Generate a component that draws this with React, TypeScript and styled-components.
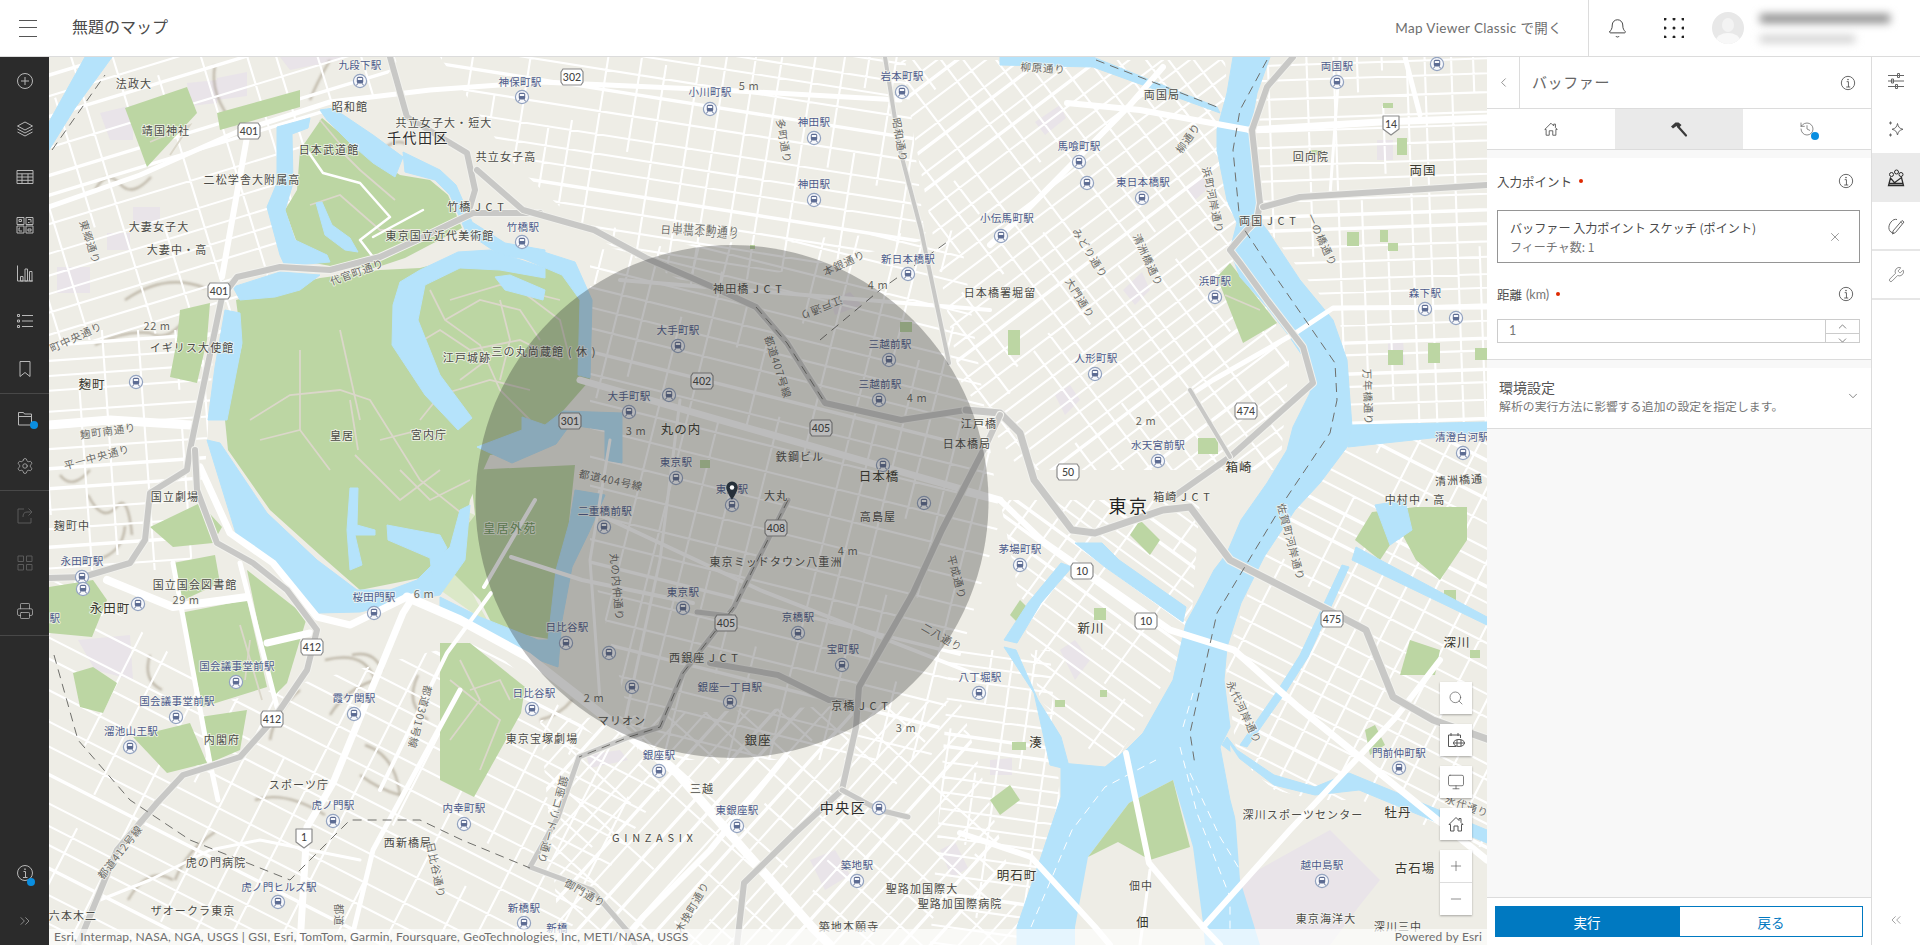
import React from 'react';
import styled, { createGlobalStyle } from 'styled-components';
import {
  Bell,
  ChevronDown,
  ChevronLeft,
  ChevronsLeft,
  ChevronsRight,
  ChevronUp,
  History,
  Minus,
  Monitor,
  Plus,
  Printer,
  Search,
  Settings,
  Wrench,
  X,
} from 'lucide-react';

const UI_FONT = `Lato, "Open Sans", "Noto Sans CJK JP", sans-serif`;
const MAP_FONT = `"Noto Sans CJK JP", "Noto Sans", sans-serif`;

const GlobalStyle = createGlobalStyle`
  html, body, #root { margin: 0; height: 100%; }
  body { overflow: hidden; font-family: ${UI_FONT}; background: #fff; }
`;

/* ---------- map data (page coordinates) ---------- */

type Patch = { pts: string; angle: number; a: number; b: number };

const PATCHES: Patch[] = [
  { pts: '49,57 400,57 300,200 240,340 49,340', angle: -17, a: 23, b: 36 },
  { pts: '49,330 215,330 205,470 190,570 49,570', angle: -4, a: 19, b: 30 },
  { pts: '49,560 230,700 480,640 660,790 560,945 49,945', angle: 27, a: 22, b: 38 },
  { pts: '440,57 905,57 925,240 700,290 590,235 510,160', angle: 9, a: 19, b: 26 },
  { pts: '590,250 960,230 1000,520 930,760 640,760 590,560', angle: 14, a: 24, b: 31 },
  { pts: '540,720 960,700 1030,945 560,945', angle: -48, a: 17, b: 27 },
  { pts: '900,60 1225,60 1240,260 1290,350 1280,470 1020,470 960,380', angle: -37, a: 16, b: 22 },
  { pts: '1255,57 1487,57 1487,430 1350,430 1340,320 1260,220', angle: -2, a: 16, b: 22 },
  { pts: '1300,440 1487,440 1487,945 1260,945 1225,660', angle: 27, a: 18, b: 28 },
  { pts: '1000,500 1200,500 1190,640 1110,770 1040,700', angle: 36, a: 17, b: 24 },
  { pts: '950,650 1050,650 1060,800 1030,945 930,945', angle: 8, a: 16, b: 24 },
  { pts: '1080,860 1140,860 1140,930 1075,930', angle: 10, a: 12, b: 22 },
];

const PARKS = [
  '125,108 187,87 197,113 147,167',
  '217,113 300,90 300,107 220,130',
  '150,527 200,503 222,527 213,543 173,547',
  '180,310 210,303 207,340 197,383 170,377 177,340',
  '173,563 215,555 220,583 177,603',
  '180,613 247,600 267,687 203,707',
  '247,570 307,617 287,683 273,697',
  '133,737 190,723 207,763 167,773',
  '200,717 247,710 240,750 212,762',
  '73,673 93,667 117,683 103,713 80,707',
  '49,587 93,580 107,600 92,637 49,633',
  '297,190 300,150 322,118 352,143 400,175 430,180 448,195 462,228 405,258 375,268 340,268 310,262 296,240 285,210',
  '236,300 320,278 380,270 420,268 470,255 560,270 585,300 590,380 555,420 520,452 490,455 470,500 460,560 420,578 360,590 320,555 270,510 228,450 225,420 242,345',
  '470,470 575,465 565,560 555,640 495,630 480,600 440,560 475,515',
  '440,643 470,643 525,687 521,713 474,797 440,780',
  '1217,277 1230,263 1277,323 1243,343',
  '1372,512 1416,507 1467,507 1467,540 1440,580 1416,560 1400,530 1380,560 1355,540',
  '1410,640 1440,650 1435,675 1400,675',
  '1020,600 1030,610 1020,625 1010,615',
  '1365,730 1375,725 1385,745 1370,755',
  '1270,820 1280,810 1300,850 1275,850',
  '1140,520 1160,540 1150,555 1130,535',
  '1356,830 1400,840 1390,870 1360,855',
  '990,800 1010,785 1020,800 1000,815',
  '1330,880 1370,850 1385,880 1350,905',
];

const LAWN = ['440,500 475,515 440,560', '440,530 476,600 490,625 440,590'];

const SMALL_GREEN: [number, number, number, number][] = [
  [1397, 138, 10, 17], [1347, 232, 12, 14], [1380, 230, 8, 12], [1388, 243, 10, 8], [1428, 343, 12, 20],
  [1388, 350, 15, 15], [1475, 348, 12, 12], [1383, 103, 10, 5], [1310, 150, 12, 5], [1198, 438, 20, 16],
  [1008, 330, 12, 25], [1094, 608, 12, 12], [1100, 690, 7, 7], [1055, 700, 10, 7], [1444, 590, 12, 12],
  [1470, 650, 10, 8], [1012, 742, 14, 8], [750, 245, 5, 4], [900, 322, 12, 10], [700, 460, 10, 8],
];

const PURPLE = [
  '1035,122 1060,105 1066,118 1045,135', '1377,140 1393,140 1393,160 1377,160', '1123,290 1142,272 1150,290 1135,305',
  '1187,190 1205,172 1212,185 1195,200', '1055,395 1070,385 1080,400 1065,415', '1388,340 1403,340 1405,365 1388,365',
  '100,113 133,105 133,140 110,140', '187,83 217,80 217,103 190,106', '217,78 247,72 247,96 217,100',
  '133,207 160,207 160,227 133,227', '107,233 130,233 130,250 107,250', '57,267 90,267 90,293 57,293', '78,640 130,635 133,680 95,670',
  '1060,650 1075,640 1090,660 1075,680', '990,760 1012,758 1012,775 990,775', '1325,820 1345,805 1370,830 1350,850',
  '1120,880 1150,860 1160,910 1130,920',
  '810,860 835,850 850,875 825,890', '940,850 955,842 968,868 952,878', '586,755 620,750 628,760 590,768',
  '290,70 340,60 346,57 280,57', '830,300 850,292 862,305 835,315',
];

const WATER = [
  '85,57 112,57 75,108 49,150 49,122',
  '277,127 310,118 308,128 292,134 293,183 285,210 295,240 327,255 330,262 285,266 280,255 267,207 277,183',
  '233,287 280,272 320,275 300,290 275,297 240,300',
  '320,110 333,108 373,135 403,157 395,177 373,163 350,143 327,120',
  '403,152 440,170 456,185 472,222 505,243 545,250 545,262 500,255 466,232 450,195 435,180 405,172',
  '420,270 458,252 490,250 545,268 545,278 500,270 460,268 425,285 418,320 440,375 472,418 458,430 425,395 392,345 393,305 400,282',
  '522,245 575,262 592,300 590,378 578,375 580,300 562,275 522,258',
  '495,277 505,290 543,300 545,290 510,275',
  '563,411 622,413 622,463 605,460 605,430 570,425 556,444 512,463 477,447 522,430 522,417 545,425',
  '575,490 605,495 590,530 572,567 562,620 558,667 511,650 474,627 440,610 440,597 480,617 538,640 548,640 556,570 570,520',
  '225,310 240,313 242,343 227,420 208,420 215,367',
  '207,440 220,443 267,513 317,560 357,590 390,590 417,580 450,547 460,510 470,505 465,560 440,595 410,600 360,612 317,613 273,560 237,537',
  '350,488 358,488 357,525 375,530 375,535 355,535 362,565 350,570 347,530',
  '387,525 440,535 447,548 432,575 430,558 388,540',
  '316,203 322,202 332,225 350,238 358,252 345,250 325,235',
  '1000,57 1093,57 1217,107 1220,113 1093,67 1000,65',
  '1233,57 1227,93 1217,130 1217,150 1227,200 1237,223 1230,250 1240,277 1267,307 1287,333 1310,367 1310,393 1293,427 1287,450 1267,483 1241,520 1227,553 1214,570 1197,603 1186,623 1173,680 1143,733 1126,750 1105,767 1061,763 1061,797 1041,857 1017,927 1017,945 1285,945 1281,923 1251,880 1230,800 1220,747 1230,727 1224,680 1227,647 1241,603 1264,557 1295,510 1320,483 1347,447 1352,427 1347,360 1333,320 1300,280 1267,230 1257,217 1250,130 1257,93 1270,57',
  '1352,425 1487,422 1487,432 1348,447',
  '1075,543 1102,543 1119,560 1186,607 1183,622 1105,567',
  '1061,563 1072,567 1041,603 1017,643 1004,640 1028,603',
  '1004,647 1016,650 1038,700 1061,737 1070,770 1050,765 1034,693',
  '1227,737 1237,750 1274,775 1315,787 1349,773 1366,780 1487,830 1487,843 1359,790 1315,795 1274,785 1222,745',
  '1356,547 1487,617 1487,625 1352,560',
  '1340,870 1487,940 1487,945 1470,945 1335,878',
  '1375,505 1405,500 1412,530 1390,545',
  '1247,747 1285,693 1308,657 1349,567 1342,565 1300,655 1278,690 1240,745',
];

const TSUKUDA = '1075,927 1088,857 1129,803 1173,780 1193,847 1203,923 1205,945 1075,945';
const ETCHU = '1230,745 1240,760 1274,790 1315,800 1360,800 1487,850 1487,945 1270,945 1240,880';

const ROADS: [string, number][] = [
  ['49,207 140,175 237,132 330,102 430,90 540,82 720,90 900,100', 5],
  ['247,137 222,277', 6],
  ['49,425 110,420 190,425', 9],
  ['200,467 230,533 273,563 317,617 350,625 407,597', 7],
  ['407,597 460,620 528,657 677,773 744,850 812,927 830,945', 9],
  ['413,597 403,613 333,783 307,827 300,945', 7],
  ['107,580 173,607 247,597', 8],
  ['267,643 310,633', 7],
  ['173,563 210,763 218,800', 5],
  ['240,563 277,707', 5],
  ['491,593 447,653 380,790', 4],
  ['460,690 373,850 350,945', 5],
  ['785,757 710,850 643,917 620,945', 6],
  ['1067,103 1140,110 1250,130', 6],
  ['1250,130 1380,122 1487,118', 7],
  ['1163,67 1130,105 1017,220 990,245', 6],
  ['1487,307 1333,308 1297,332 1213,380 1193,393', 5],
  ['1045,543 1170,630 1234,650 1298,707 1487,860', 7],
  ['1203,927 1290,830 1396,717 1440,660', 6],
  ['1126,753 1149,863 1180,900 1203,927 1220,945', 6],
  ['960,833 1031,857 1095,927 1110,945', 6],
  ['1000,500 1045,543', 6],
  ['1140,945 1150,870', 3],
  ['100,900 150,880 210,850 260,840 360,860', 3],
  ['620,280 990,310', 4],
  ['580,380 1000,500', 7],
  ['600,515 760,590 990,680', 4],
  ['1330,195 1340,57', 3],
  ['1405,57 1420,115', 5],
  ['484,587 535,500', 4],
  ['511,557 582,580 693,603', 4],
  ['307,150 323,173 360,183 390,217 360,240 373,257', 2.5],
  ['373,237 423,210', 2.5],
  ['610,440 590,560 600,700', 3],
  ['680,400 660,560 625,720', 3],
];

const HIGHWAYS: [string, number][] = [
  ['390,57 407,117 467,153 475,190 470,207', 6],
  ['540,213 473,213 417,240 380,257 330,270 280,267 237,277 222,297 190,450 187,470 150,493 145,540 130,563 83,577 49,578', 6],
  ['477,170 523,210 594,230 646,258 715,288 756,307 787,343 825,403 901,420 966,410', 6],
  ['195,450 197,490 217,543 253,563 287,590 317,630 307,670 273,720 240,757 183,775 157,803 117,850 78,945', 6],
  ['966,410 1000,413 1020,433 1034,480 1072,530 1095,533 1163,510 1190,507 1230,560 1328,610 1366,630 1393,697 1433,720 1490,740', 7],
  ['1173,497 1230,457 1313,383 1303,347 1267,300 1240,263 1230,250 1247,230 1257,220 1260,203 1252,130 1267,87 1293,57', 6],
  ['1263,207 1300,197 1487,185', 6],
  ['1190,390 1230,457', 4],
  ['788,500 734,607 683,673 660,727 629,737 579,757 558,817 530,867 592,890 629,933 635,945', 5],
  ['697,612 730,616', 5],
  ['710,663 778,675 829,700 859,703', 6],
  ['987,443 942,530 913,593 859,687 856,727 842,790 795,833 744,883 737,945', 6],
  ['842,790 879,810 908,817', 5],
  ['1000,415 987,443', 6],
  ['949,363 921,230 900,150 885,57', 4],
];

const RAILS = [
  '1267,60 1240,110 1233,150 1240,223 1273,273 1335,363 1337,400 1330,433 1287,497 1217,613 1190,733 1195,765',
  '1096,60 1217,107',
  '52,150 105,75',
  '788,500 734,607 683,673 660,727 629,737 579,757',
  '756,307 787,343 825,403',
  '54,655 78,740 130,800 190,840 290,880 350,820 420,820 462,840 530,868',
  '820,340 880,290 950,240',
];

const BAY_DASH = [
  '1031,927 1072,830 1105,787 1156,760', '1183,727 1193,693', '1180,747 1197,813 1230,897 1230,930', '1190,773 1220,837 1240,870',
];

const PALACE_PATHS = [
  '250,420 290,395 340,390 370,400 420,480 470,520', '415,345 440,330 470,350 520,340 560,360', '450,300 500,285 560,300',
  '420,420 440,395 490,380 530,390', '355,455 400,500 440,470', '310,205 340,195 380,230 420,230', '340,150 360,170 395,200',
  '150,142 190,125 170,155', '350,400 358,450', '240,625 262,700', '450,680 500,720 480,770', '1225,295 1260,310',
  '430,290 445,320 480,345 500,390 530,420', '445,320 480,300 520,310 540,340', '460,380 500,350', '500,300 510,340 500,380',
  '520,290 560,320 570,360', '260,440 300,430 330,470', '300,350 300,430', '380,440 420,430 445,440', '400,470 430,500 470,480',
  '340,330 360,420', '470,690 500,680 510,700', '460,660 480,700 450,740', '250,640 245,680', '320,120 345,150',
];

const HILLS = [
  'M95,190 q12,-22 26,-5 q12,12 30,-8', 'M125,300 q40,-28 80,-12', 'M95,345 q30,-15 55,-12 q18,10 36,-15',
  'M88,495 q15,30 30,10 q10,-10 14,30', 'M95,560 q28,-6 30,-34', 'M325,660 q40,-10 50,20 q-30,10 -45,35',
  'M300,690 q-25,20 -30,50', 'M365,745 q30,10 35,50 q-20,-5 -40,-20', 'M352,655 q22,-5 30,15', 'M418,675 q-14,30 10,45',
  'M128,900 q20,-35 45,-20', 'M175,880 q12,-30 40,-48', 'M255,800 q30,-10 70,15', 'M540,720 q20,-5 32,-20',
  'M60,475 q12,16 30,-5', 'M150,655 q-8,25 12,35', 'M215,65 q-6,30 20,60', 'M330,60 q-14,24 -20,40', 'M382,150 q14,-12 24,-6',
];

type Kind = 's' | 'p' | 'n' | 'w' | 'big' | 'r' | 'e' | 'g';
type Label = [string, number, number, Kind, number?];

const LABELS: Label[] = [
  ['九段下駅', 360, 65, 's'], ['神保町駅', 520, 82, 's'], ['法政大', 134, 84, 'p'], ['昭和館', 350, 107, 'p'],
  ['靖国神社', 166, 131, 'p'], ['共立女子大・短大', 444, 123, 'p'], ['千代田区', 418, 139, 'w'], ['共立女子高', 506, 157, 'p'],
  ['日本武道館', 329, 150, 'p'], ['二松学舎大附属高', 252, 180, 'p'], ['竹橋 J C T', 476, 207, 'p'], ['竹橋駅', 523, 227, 's'],
  ['東京国立近代美術館', 440, 236, 'p'], ['大妻女子大', 159, 227, 'p'], ['大妻中・高', 177, 250, 'p'], ['東郷通り', 90, 242, 'r', 72],
  ['代官町通り', 357, 272, 'r', -20], ['22 m', 157, 326, 'e'], ['町中央通り', 76, 337, 'r', -25], ['イギリス大使館', 192, 348, 'p'],
  ['江戸城跡', 467, 358, 'p'], ['三の丸尚蔵館 ( 休 )', 544, 352, 'p'], ['麹町', 92, 385, 'n'], ['麹町南通り', 108, 431, 'r', -8],
  ['皇居', 342, 436, 'p'], ['宮内庁', 429, 435, 'p'], ['平一中央通り', 97, 457, 'r', -15], ['国立劇場', 175, 497, 'p'],
  ['麹町中', 72, 526, 'p'], ['永田町駅', 82, 561, 's'], ['国立国会図書館', 195, 585, 'p'], ['29 m', 186, 600, 'e'],
  ['永田町', 110, 609, 'n'], ['駅', 55, 618, 's'], ['桜田門駅', 374, 597, 's'], ['6 m', 424, 594, 'e'],
  ['国会議事堂前駅', 237, 666, 's'], ['国会議事堂前駅', 177, 701, 's'], ['霞ケ関駅', 354, 698, 's'], ['溜池山王駅', 131, 731, 's'],
  ['内閣府', 222, 740, 'p'], ['スポーツ庁', 299, 785, 'p'], ['虎ノ門駅', 333, 805, 's'], ['西新橋局', 408, 843, 'p'],
  ['内幸町駅', 464, 808, 's'], ['都道301号線', 420, 717, 'r', 105], ['都道412号線', 120, 852, 'r', -52], ['虎の門病院', 216, 863, 'p'],
  ['虎ノ門ヒルズ駅', 279, 887, 's'], ['六本木二', 73, 916, 'p'], ['ザオークラ東京', 193, 911, 'p'], ['都道', 339, 915, 'r', 90],
  ['日比谷通り', 436, 870, 'r', 78], ['神田橋 J C T', 748, 289, 'p'], ['大手町駅', 678, 330, 's'], ['大手町駅', 629, 396, 's'],
  ['3 m', 636, 431, 'e'], ['丸の内', 681, 430, 'n'], ['東京駅', 676, 462, 's'], ['鉄鋼ビル', 800, 457, 'p'], ['日本橋', 879, 477, 'n'],
  ['日本橋局', 967, 444, 'p'], ['江戸橋', 979, 424, 'p'], ['大丸', 776, 496, 'p'], ['東京駅', 732, 489, 's'], ['高島屋', 878, 517, 'p'],
  ['二重橋前駅', 605, 511, 's'], ['皇居外苑', 510, 529, 'g'], ['都道404号線', 611, 480, 'r', 12], ['都道407号線', 778, 367, 'r', 72],
  ['日本橋本町通り', 700, 232, 'r', 4], ['本銀通り', 844, 263, 'r', -25], ['江戸通り', 821, 308, 'r', 158], ['新日本橋駅', 908, 259, 's'],
  ['日本橋署堀留', 1000, 293, 'p'], ['4 m', 878, 285, 'e'], ['三越前駅', 890, 344, 's'], ['三越前駅', 880, 384, 's'], ['4 m', 917, 398, 'e'],
  ['東京ミッドタウン八重洲', 776, 562, 'p'], ['4 m', 848, 551, 'e'], ['丸の内仲通り', 617, 587, 'r', 85], ['東京駅', 683, 592, 's'],
  ['京橋駅', 798, 617, 's'], ['二八通り', 942, 637, 'r', 30], ['平成通り', 957, 577, 'r', 75], ['日比谷駅', 567, 627, 's'], ['2 m', 594, 698, 'e'],
  ['宝町駅', 843, 649, 's'], ['西銀座 J C T', 704, 658, 'p'], ['銀座一丁目駅', 730, 687, 's'], ['マリオン', 622, 721, 'p'],
  ['京橋 J C T', 860, 706, 'p'], ['銀座', 758, 741, 'n'], ['3 m', 906, 728, 'e'], ['日比谷駅', 534, 693, 's'], ['東京宝塚劇場', 542, 739, 'p'],
  ['銀座駅', 659, 755, 's'], ['三越', 702, 789, 'p'], ['銀座コリドー通り', 553, 820, 'r', 105], ['東銀座駅', 737, 810, 's'],
  ['中央区', 843, 809, 'w'], ['G I N Z A S I X', 653, 838, 'p'], ['御門通り', 585, 893, 'r', 30], ['新橋駅', 524, 908, 's'], ['新橋', 557, 928, 's'],
  ['木挽町通り', 692, 907, 'r', -60], ['築地駅', 857, 865, 's'], ['聖路加国際大', 922, 889, 'p'], ['聖路加国際病院', 960, 904, 'p'],
  ['築地本願寺', 849, 927, 'p'], ['東京', 1129, 509, 'big'], ['箱崎 J C T', 1182, 497, 'p'], ['中村中・高', 1415, 500, 'p'],
  ['茅場町駅', 1020, 549, 's'], ['新川', 1091, 629, 'n'], ['佐賀町河岸通り', 1291, 542, 'r', 75], ['深川', 1457, 643, 'n'],
  ['八丁堀駅', 980, 677, 's'], ['永代河岸通り', 1244, 712, 'r', 65], ['門前仲町駅', 1399, 753, 's'], ['湊', 1036, 743, 'n'],
  ['深川スポーツセンター', 1303, 815, 'p'], ['牡丹', 1398, 813, 'n'], ['越中島駅', 1322, 865, 's'], ['古石場', 1415, 869, 'n'],
  ['明石町', 1017, 876, 'n'], ['佃中', 1141, 886, 'p'], ['佃', 1143, 923, 'n'], ['東京海洋大', 1326, 919, 'p'], ['深川三中', 1398, 927, 'p'],
  ['永代通り', 1467, 806, 'r', 20], ['柳原通り', 1043, 68, 'r', 4], ['両国局', 1162, 95, 'p'], ['両国駅', 1337, 66, 's'],
  ['馬喰町駅', 1079, 146, 's'], ['清洲橋通り', 1148, 260, 'r', 65], ['柳通り', 1188, 138, 'r', -55], ['回向院', 1311, 157, 'p'], ['両国', 1423, 171, 'n'],
  ['東日本橋駅', 1143, 182, 's'], ['小伝馬町駅', 1007, 218, 's'], ['みどり通り', 1090, 253, 'r', 58], ['大門通り', 1080, 298, 'r', 58],
  ['両国 J C T', 1268, 221, 'p'], ['一の橋通り', 1322, 240, 'r', 65], ['浜町河岸通り', 1213, 200, 'r', 78], ['浜町駅', 1215, 281, 's'],
  ['森下駅', 1425, 293, 's'], ['人形町駅', 1096, 358, 's'], ['万年橋通り', 1368, 397, 'r', 88], ['2 m', 1146, 421, 'e'], ['清澄白河駅', 1462, 437, 's'],
  ['水天宮前駅', 1158, 445, 's'], ['箱崎', 1239, 468, 'n'], ['清洲橋通', 1459, 480, 'p', -4], ['小川町駅', 710, 92, 's'], ['5 m', 749, 86, 'e'],
  ['神田駅', 814, 122, 's'], ['岩本町駅', 902, 76, 's'], ['神田駅', 814, 184, 's'], ['多町通り', 784, 141, 'r', 80], ['昭和通り', 900, 140, 'r', 80],
  ['出世不動通り', 706, 229, 'r', 4],
];

const STATIONS: [number, number][] = [
  [360, 81], [522, 97], [522, 242], [136, 382], [82, 577], [83, 589], [138, 604], [374, 613], [236, 682], [176, 717], [354, 714],
  [130, 747], [333, 821], [278, 902], [464, 824], [678, 346], [629, 412], [669, 395], [676, 478], [883, 465], [732, 505], [924, 503],
  [604, 527], [908, 274], [889, 360], [879, 400], [683, 608], [798, 633], [566, 643], [609, 653], [632, 687], [842, 665], [730, 702],
  [532, 709], [659, 771], [737, 826], [879, 808], [524, 923], [857, 881], [1020, 565], [979, 693], [1399, 768], [1322, 881],
  [1337, 82], [1437, 64], [1079, 162], [1087, 183], [1142, 198], [1001, 236], [1215, 297], [1425, 309], [1456, 318], [1095, 374],
  [1463, 453], [1158, 461], [710, 109], [814, 138], [902, 92], [814, 200],
];

const SHIELDS: [string, number, number][] = [
  ['401', 249, 131], ['401', 219, 291], ['412', 312, 647], ['412', 272, 719], ['302', 572, 77], ['402', 702, 381], ['301', 570, 421],
  ['405', 821, 428], ['408', 776, 528], ['405', 726, 623], ['10', 1082, 571], ['10', 1146, 621], ['475', 1332, 619], ['474', 1246, 411], ['50', 1068, 472],
];

const PENT: [string, number, number][] = [['14', 1391, 125], ['1', 304, 838]];

/* seeded random so the generated street grid stays the same between renders */
let seed = 20240;
const rnd = (min: number, max: number) => {
  seed = (seed * 16807) % 2147483647;
  return min + ((seed - 1) / 2147483646) * (max - min);
};

const buildGrid = ({ pts, angle, a, b }: Patch) => {
  const xy = pts.split(' ').map((p) => p.split(',').map(Number));
  const xs = xy.map((p) => p[0]);
  const ys = xy.map((p) => p[1]);
  const cx = (Math.min(...xs) + Math.max(...xs)) / 2;
  const cy = (Math.min(...ys) + Math.max(...ys)) / 2;
  const r = Math.hypot(Math.max(...xs) - cx, Math.max(...ys) - cy) + 10;
  const rad = (angle * Math.PI) / 180;
  const dx = Math.cos(rad);
  const dy = Math.sin(rad);
  let minor = '';
  let major = '';
  for (let t = -r; t < r; t += rnd(a * 0.75, a * 1.3)) {
    const x0 = cx - dy * t;
    const y0 = cy + dx * t;
    const seg = `M${(x0 - dx * r).toFixed(1)},${(y0 - dy * r).toFixed(1)}L${(x0 + dx * r).toFixed(1)},${(y0 + dy * r).toFixed(1)}`;
    if (rnd(0, 1) < 0.22) major += seg;
    else minor += seg;
  }
  for (let t = -r; t < r; t += rnd(b * 0.75, b * 1.3)) {
    const x0 = cx + dx * t;
    const y0 = cy + dy * t;
    let s = -r;
    while (s < r) {
      const len = rnd(30, 120);
      if (rnd(0, 1) > 0.22) {
        minor += `M${(x0 - dy * s).toFixed(1)},${(y0 + dx * s).toFixed(1)}L${(x0 - dy * (s + len)).toFixed(1)},${(y0 + dx * (s + len)).toFixed(1)}`;
      }
      s += len;
    }
  }
  return { pts, minor, major };
};

const GRIDS = PATCHES.map(buildGrid);

/* ---------- map parts ---------- */

const LABEL_STYLE: Record<Kind, string> = {
  s: 'font-size: 10.5px; letter-spacing: 0.3px; fill: #4c5b8c;',
  p: 'font-size: 11px; letter-spacing: 1.1px; fill: #4b4b47;',
  n: 'font-size: 12.5px; letter-spacing: 1px; fill: #38382f;',
  w: 'font-size: 14px; letter-spacing: 1.5px; fill: #2d2d2d;',
  big: 'font-size: 18px; letter-spacing: 2.5px; fill: #222;',
  r: 'font-size: 10.5px; letter-spacing: 0.8px; fill: #6c6c68;',
  e: 'font-size: 11px; letter-spacing: 0.5px; fill: #66665f;',
  g: 'font-size: 12px; letter-spacing: 1.4px; fill: #6d9a5a;',
};

const MapLabel = styled.text<{ $kind: Kind }>`
  font-family: ${MAP_FONT};
  text-anchor: middle;
  paint-order: stroke;
  stroke: rgba(246, 246, 240, 0.75);
  stroke-width: 2px;
  stroke-linejoin: round;
  ${({ $kind }) => LABEL_STYLE[$kind]}
`;

const ShieldText = styled.text`
  font-family: Lato, sans-serif;
  font-size: 10.5px;
  font-weight: 500;
  fill: #444;
  text-anchor: middle;
`;

const MapCanvas = styled.svg`
  display: block;
  width: 1438px;
  height: 888px;
`;

const StationIcon = ({ x, y }: { x: number; y: number }) => (
  <g transform={`translate(${x} ${y})`}>
    <circle r="6.6" fill="#f7f8fb" stroke="#93a3c0" strokeWidth="1.2" />
    <rect x="-3.2" y="-4.2" width="6.4" height="6.6" rx="1.6" fill="#5d6c93" />
    <rect x="-2.2" y="-3" width="4.4" height="2" fill="#f7f8fb" />
    <path d="M-2.4 2.4 L-3.4 4.4 M2.4 2.4 L3.4 4.4" stroke="#5d6c93" strokeWidth="1" />
  </g>
);

const Shield = ({ text, x, y }: { text: string; x: number; y: number }) => (
  <g transform={`translate(${x} ${y})`}>
    <path d="M-11,-5 L-9,-8 L9,-8 L11,-5 L11,5 L9,8 L-9,8 L-11,5 Z" fill="#fff" stroke="#8c8c8c" strokeWidth="1.2" />
    <ShieldText y="4">{text}</ShieldText>
  </g>
);

const RouteShield = ({ text, x, y }: { text: string; x: number; y: number }) => (
  <g transform={`translate(${x} ${y})`}>
    <path d="M-8,-9 L8,-9 L8,4 L0,10 L-8,4 Z" fill="#fff" stroke="#8c8c8c" strokeWidth="1.2" strokeLinejoin="round" />
    <ShieldText y="3">{text}</ShieldText>
  </g>
);

const BaseMap = () => (
  <MapCanvas viewBox="49 57 1438 888">
    <defs>
      <filter id="soft">
        <feGaussianBlur stdDeviation="1.1" />
      </filter>
      {GRIDS.map((g, i) => (
        <clipPath id={`patch${i}`} key={i}>
          <polygon points={g.pts} />
        </clipPath>
      ))}
    </defs>
    <rect x="49" y="57" width="1438" height="888" fill="#eeede6" />
    {PURPLE.map((p, i) => (
      <polygon key={i} points={p} fill="#e9e4e9" />
    ))}
    <g filter="url(#soft)" fill="none" stroke="#85785f" strokeOpacity="0.45" strokeWidth="2.4">
      {HILLS.map((d, i) => (
        <path key={i} d={d} />
      ))}
    </g>
    {GRIDS.map((g, i) => (
      <g key={i} clipPath={`url(#patch${i})`} fill="none" stroke="#fff">
        <path d={g.minor} strokeWidth="2.1" />
        <path d={g.major} strokeWidth="3.4" />
      </g>
    ))}
    <polygon points={ETCHU} fill="#eeede6" />
    {LAWN.map((p, i) => (
      <polygon key={i} points={p} fill="#dbe8c8" />
    ))}
    {PARKS.map((p, i) => (
      <polygon key={i} points={p} fill="#bcd6a3" />
    ))}
    {SMALL_GREEN.map(([x, y, w, h], i) => (
      <rect key={i} x={x} y={y} width={w} height={h} fill="#bcd6a3" />
    ))}
    <g fill="none" stroke="#dbd7ca" strokeWidth="1.8">
      {PALACE_PATHS.map((p, i) => (
        <polyline key={i} points={p} />
      ))}
    </g>
    {WATER.map((p, i) => (
      <polygon key={i} points={p} fill="#b5e3fb" stroke="#b5e3fb" strokeWidth="1" strokeLinejoin="round" />
    ))}
    <polygon points={TSUKUDA} fill="#eeede6" />
    <polygon points="1088,857 1129,803 1173,780 1190,847 1150,860 1118,842" fill="#bcd6a3" />
    <polygon points={ETCHU} fill="#eeede6" />
    <polygon points="1240,880 1330,830 1380,880 1360,905 1330,945 1260,945" fill="#e9e4e9" />
    <g fill="none" stroke="#fff" strokeLinecap="round" strokeLinejoin="round">
      {ROADS.map(([p, w], i) => (
        <polyline key={i} points={p} strokeWidth={w} />
      ))}
    </g>
    <g fill="none" stroke="#fff" strokeWidth="1" strokeDasharray="8 6">
      {BAY_DASH.map((p, i) => (
        <polyline key={i} points={p} />
      ))}
    </g>
    <g fill="none" strokeLinecap="round" strokeLinejoin="round">
      {HIGHWAYS.map(([p, w], i) => (
        <g key={i}>
          <polyline points={p} stroke="#f2f2ee" strokeWidth={w + 2} />
          <polyline points={p} stroke="#c8c8c6" strokeWidth={w} />
        </g>
      ))}
    </g>
    <g fill="none" stroke="#6f6f6b" strokeWidth="1" strokeDasharray="9 6">
      {RAILS.map((p, i) => (
        <polyline key={i} points={p} />
      ))}
    </g>
    {STATIONS.map(([x, y], i) => (
      <StationIcon key={i} x={x} y={y} />
    ))}
    {SHIELDS.map(([t, x, y], i) => (
      <Shield key={i} text={t} x={x} y={y} />
    ))}
    {PENT.map(([t, x, y], i) => (
      <RouteShield key={i} text={t} x={x} y={y} />
    ))}
    {LABELS.map(([t, x, y, k, rot], i) => (
      <MapLabel key={i} x={x} y={y + 4} $kind={k} transform={rot ? `rotate(${rot} ${x} ${y})` : undefined}>
        {t}
      </MapLabel>
    ))}
    <circle cx="732" cy="501.5" r="256.5" fill="rgb(48, 48, 46)" fillOpacity="0.32" />
    <path
      d="M732 481.5a5.8 5.8 0 0 0-5.8 5.8c0 4.2 5.8 12.7 5.8 12.7s5.8-8.500 5.8-12.7a5.800 5.800 0 0 0-5.800-5.800z"
      fill="#26303a"
    />
    <circle cx="732" cy="487.500" r="2.2" fill="#fff" />
  </MapCanvas>
);

/* ---------- icons ---------- */

const Glyph = styled.svg<{ $size?: number }>`
  display: block;
  width: ${({ $size }) => $size ?? 18}px;
  height: ${({ $size }) => $size ?? 18}px;
  fill: none;
  stroke: currentColor;
  stroke-width: 1;
`;

const NavIcons: Record<string, React.ReactNode> = {
  add: (
    <>
      <circle cx="9" cy="9" r="7.5" />
      <path d="M9 5v8M5 9h8" />
    </>
  ),
  layers: <path d="M9 2 1.500 6 9 10l7.500-4zM1.500 9 9 13l7.500-4M1.500 12 9 16l7.500-4" />,
  table: <path d="M1 2.500h16v13H1zM1 5.800h16M1 9h16M1 12.300h16M6 5.800v9.700M12 5.800v9.700" />,
  qr: (
    <path d="M1 1.500h7v7H1zM10 1.500h7v7h-7zM1 10h7v7H1zM10 10h7v7h-7zM3 3.500h2.500v2H3zM12 3.500h3M15 3.500v3M12 6.500h1.500M3 12h1M3 12v3h3M12 13h3v2h-3z" />
  ),
  chart: <path d="M1.500 1.500v15.500h15.500M4.500 12.500h2.500v4.500H4.500zM9 5h2.500v12H9zM13.500 7.500H16V17h-2.500z" />,
  list: <path d="M1.500 2.500h2v2h-2zM1.500 8h2v2h-2zM1.500 13.500h2v2h-2zM6 3.500h11M6 9h11M6 14.500h11" />,
  bookmark: <path d="M4 1.500h10v15L9 12.500l-5 4z" />,
  folder: <path d="M2.500 7V3.500h5L8.500 5h7v11h-13zM2.500 7.500h13" />,
  share: <path d="M8 3H2v14h13v-5M16 6h-5c-3 0-4 2-4 5M12.500 2.500 16 6l-3.500 3.500" />,
  grid: <path d="M2 2h5.500v5.500H2zM10.500 2H16v5.500h-5.500zM2 10.500h5.500V16H2zM10.500 10.500H16V16h-5.500z" />,
  info: (
    <>
      <circle cx="9" cy="9" r="7.500" />
      <circle cx="9" cy="5.200" r="0.500" />
      <path d="M7.500 7.500h2v6M7 13.500h4.500" />
    </>
  ),
  home: <path d="M2 9.500 9 2.500l3 3V3.500h2v4l2 2h-1.500V16H11v-5H7v5H3.500V9.500z" />,
  sliders: (
    <path d="M1 3.500h16M1 9h16M1 14.500h16M10.500 1.500h2v4h-2zM4.500 7h2v4h-2zM8.500 12.500h2v4h-2z" />
  ),
  sparkle: <path d="M10.500 3.500c.7 3.500 2 5 5.500 5.800-3.500.8-4.800 2.300-5.500 5.700-.7-3.400-2-4.900-5.500-5.700 3.500-.8 4.800-2.300 5.500-5.800zM3.500 1.500v3M2 3h3M3.500 13.500v3M2 15h3" />,
  analysis: (
    <>
      <circle cx="4.500" cy="5.500" r="2" />
      <circle cx="9.500" cy="3" r="2" />
      <circle cx="14" cy="5.500" r="2" />
      <path d="M3.500 9 1.500 16.500h15L14.500 8.500l-7 5.200-4-4.700zM1.500 14.500h15" strokeWidth="1.300" />
    </>
  ),
  edit: <path d="M7 16C2 16 0 10 4 5c2-2.500 4-3 6-2.500M6 14l9-10.500 2 1.500-8.500 10.500-3 1.500zM13.500 5l2 1.500" />,
  basemap: (
    <>
      <path d="M9 15.500H1.500V4h12v3M4 2v3M11 2v3" />
      <ellipse cx="12" cy="12" rx="5.500" ry="3.500" />
      <path d="M6.500 12h11M10 8.700v6.600M14 8.700v6.600" />
    </>
  ),
};

const NavGlyph = ({ name, size }: { name: string; size?: number }) => (
  <Glyph $size={size} viewBox="0 0 18 18">
    {NavIcons[name]}
  </Glyph>
);

const Hammer = () => (
  <svg width="18" height="18" viewBox="0 0 18 18">
    <path d="M1 6.500 5.500 2.500h3l3 2.500-3 3.300L6.500 6 3 8.500z" fill="#3a3a3a" />
    <path d="M8 6.500 16 15.500" stroke="#3a3a3a" strokeWidth="2.200" strokeLinecap="round" />
  </svg>
);

const AppsDots = () => (
  <svg width="20" height="20" viewBox="0 0 20 20" fill="#222">
    {[1, 10, 19].flatMap((y) => [1, 10, 19].map((x) => <circle key={`${x}-${y}`} cx={x} cy={y} r="1.500" />))}
  </svg>
);

/* ---------- page ---------- */

const Page = styled.div`
  display: flex;
  flex-direction: column;
  width: 1920px;
  height: 945px;
  overflow: hidden;
`;

const TopBar = styled.header`
  display: flex;
  align-items: stretch;
  height: 56px;
  flex: none;
  background: #fff;
  border-bottom: 1px solid #dcdcdc;
`;

const MenuButton = styled.div`
  display: flex;
  flex-direction: column;
  justify-content: space-between;
  width: 18px;
  height: 15px;
  margin: 20px 35px 0 19px;
  border-top: 1px solid #555;
  border-bottom: 1px solid #555;
  &::before {
    content: '';
    height: 1px;
    background: #555;
    margin-top: 6px;
  }
`;

const MapTitle = styled.h1`
  margin: 0 0 4px;
  align-self: center;
  font-size: 16px;
  font-weight: 400;
  color: #4a4a4a;
  font-family: ${MAP_FONT};
`;

const ClassicLink = styled.a`
  margin: 0 0 2px auto;
  align-self: center;
  padding-right: 26px;
  font-size: 13.5px;
  letter-spacing: 0.35px;
  color: #6e6e6e;
`;

const BarTools = styled.div`
  display: flex;
  align-items: center;
  width: 331px;
  border-left: 1px solid #dcdcdc;
  color: #2f2f2f;
`;

const BarTool = styled.div<{ $width: number }>`
  display: flex;
  align-items: center;
  justify-content: center;
  width: ${({ $width }) => $width}px;
`;

const Avatar = styled.div`
  position: relative;
  width: 32px;
  height: 32px;
  margin: 0 16px 0 11px;
  border-radius: 50%;
  background: #e8e8e8;
  overflow: hidden;
  &::before {
    content: '';
    position: absolute;
    left: 10px;
    top: 6px;
    width: 12px;
    height: 14px;
    border-radius: 50%;
    background: #f3f3f3;
  }
  &::after {
    content: '';
    position: absolute;
    left: 4px;
    top: 21px;
    width: 24px;
    height: 16px;
    border-radius: 50%;
    background: #f8f8f8;
  }
`;

const BlurName = styled.div`
  display: flex;
  flex-direction: column;
  gap: 13px;
`;

const BlurLine = styled.div<{ $width: number; $tone: string; $height: number }>`
  width: ${({ $width }) => $width}px;
  height: ${({ $height }) => $height}px;
  background: ${({ $tone }) => $tone};
  filter: blur(4px);
`;

const Workspace = styled.div`
  display: flex;
  flex: 1;
  min-height: 0;
`;

const SideNav = styled.nav`
  display: flex;
  flex-direction: column;
  width: 49px;
  flex: none;
  background: #2b2b2b;
`;

const NavGroup = styled.div`
  border-bottom: 1px solid #484848;
`;

const NavBottom = styled.div`
  margin-top: auto;
`;

const NavItem = styled.div<{ $dim?: boolean }>`
  position: relative;
  display: flex;
  align-items: center;
  justify-content: center;
  height: 48px;
  color: ${({ $dim }) => ($dim ? '#5a5a5a' : '#b8b8b8')};
`;

const BlueDot = styled.span<{ $right: number; $bottom: number }>`
  position: absolute;
  right: ${({ $right }) => $right}px;
  bottom: ${({ $bottom }) => $bottom}px;
  width: 8px;
  height: 8px;
  border-radius: 50%;
  background: #0a8ee0;
`;

const MapArea = styled.main`
  position: relative;
  width: 1438px;
  flex: none;
  overflow: hidden;
`;

const MapControls = styled.div`
  position: absolute;
  right: 15px;
  bottom: 30px;
  display: flex;
  flex-direction: column;
  gap: 10px;
`;

const ControlGroup = styled.div`
  display: flex;
  flex-direction: column;
  background: #fff;
  box-shadow: 0 1px 2px rgba(0, 0, 0, 0.3);
`;

const ControlButton = styled.div<{ $divided?: boolean }>`
  display: flex;
  align-items: center;
  justify-content: center;
  width: 32px;
  height: 32px;
  color: #555;
  background: #fff;
  border-top: ${({ $divided }) => ($divided ? '1px solid #ddd' : 'none')};
`;

const Attribution = styled.div`
  position: absolute;
  left: 0;
  right: 0;
  bottom: 0;
  height: 16px;
  display: flex;
  justify-content: space-between;
  padding: 0 5px;
  background: rgba(255, 255, 255, 0.65);
  font-size: 12px;
  line-height: 16px;
  letter-spacing: 0.2px;
  color: #6e6e6e;
`;

const Panel = styled.aside`
  display: flex;
  flex-direction: column;
  width: 385px;
  flex: none;
  box-sizing: border-box;
  background: #f8f8f8;
  border-right: 1px solid #dcdcdc;
  font-family: ${MAP_FONT};
`;

const PanelHeader = styled.div`
  display: flex;
  align-items: stretch;
  height: 52px;
  flex: none;
  box-sizing: border-box;
  background: #fff;
  border-bottom: 1px solid #dcdcdc;
`;

const BackButton = styled.div`
  display: flex;
  align-items: center;
  justify-content: center;
  width: 32px;
  color: #555;
  border-right: 1px solid #dcdcdc;
`;

const PanelTitle = styled.h2`
  flex: 1;
  margin: 0 0 2px 12px;
  align-self: center;
  font-size: 15px;
  font-weight: 400;
  letter-spacing: 0.6px;
  color: #666;
`;

const InfoIcon = styled.div<{ $gap: number }>`
  display: flex;
  align-items: center;
  margin-right: ${({ $gap }) => $gap}px;
  color: #555;
`;

const Tabs = styled.div`
  display: flex;
  height: 41px;
  flex: none;
  box-sizing: border-box;
  background: #fff;
  border-bottom: 1px solid #dcdcdc;
`;

const Tab = styled.div<{ $active?: boolean }>`
  position: relative;
  flex: 1;
  display: flex;
  align-items: center;
  justify-content: center;
  color: #555;
  background: ${({ $active }) => ($active ? '#eaeaea' : '#fff')};
`;

const Section = styled.section`
  flex: none;
  margin-top: 8px;
  padding: 10px 11px 16px 10px;
  background: #fff;
  border-bottom: 1px solid #dcdcdc;
`;

const FieldRow = styled.div`
  display: flex;
  align-items: center;
  justify-content: space-between;
  height: 26px;
`;

const FieldLabel = styled.label`
  display: flex;
  align-items: center;
  font-size: 12.5px;
  color: #4a4a4a;
`;

const Unit = styled.span`
  margin-left: 4px;
  font-family: ${UI_FONT};
  color: #757575;
`;

const Required = styled.span`
  width: 4px;
  height: 4px;
  margin-left: 7px;
  border-radius: 50%;
  background: #de2900;
`;

const LayerChip = styled.div`
  display: flex;
  align-items: center;
  justify-content: space-between;
  box-sizing: border-box;
  height: 53px;
  margin: 16px 0 18px;
  padding: 0 17px 0 12px;
  border: 1px solid #959595;
  color: #555;
`;

const ChipName = styled.div`
  font-size: 12.1px;
  line-height: 19px;
  color: #4a4a4a;
`;

const ChipMeta = styled.div`
  font-size: 12px;
  line-height: 19px;
  color: #757575;
`;

const NumberField = styled.div`
  display: flex;
  box-sizing: border-box;
  height: 24px;
  margin-top: 12px;
  border: 1px solid #ccc;
`;

const NumberValue = styled.div`
  flex: 1;
  padding-left: 11px;
  font-family: ${UI_FONT};
  font-size: 12.5px;
  line-height: 22px;
  color: #777;
`;

const Spinner = styled.div`
  display: flex;
  flex-direction: column;
  width: 33px;
  border-left: 1px solid #ccc;
`;

const SpinButton = styled.div<{ $divided?: boolean }>`
  flex: 1;
  display: flex;
  align-items: center;
  justify-content: center;
  color: #444;
  border-top: ${({ $divided }) => ($divided ? '1px solid #ccc' : 'none')};
`;

const EnvSection = styled.section`
  flex: none;
  display: flex;
  align-items: center;
  justify-content: space-between;
  box-sizing: border-box;
  height: 61px;
  margin-top: 8px;
  padding: 0 11px 4px 12px;
  background: #fff;
  border-bottom: 1px solid #dcdcdc;
  color: #555;
`;

const EnvTitle = styled.div`
  font-size: 14px;
  line-height: 20px;
  color: #555;
`;

const EnvNote = styled.div`
  font-size: 11.8px;
  line-height: 18px;
  letter-spacing: 0.1px;
  color: #757575;
`;

const Footer = styled.div`
  display: flex;
  flex: none;
  box-sizing: border-box;
  height: 48px;
  margin-top: auto;
  padding: 8px 8px;
  background: #fff;
  border-top: 1px solid #dcdcdc;
`;

const ActionButton = styled.button<{ $primary?: boolean }>`
  flex: 1;
  margin: 0;
  padding: 0;
  font-family: ${MAP_FONT};
  font-size: 13.500px;
  color: ${({ $primary }) => ($primary ? '#fff' : '#0079c1')};
  background: ${({ $primary }) => ($primary ? '#0079c1' : '#fff')};
  border: 1px solid #0079c1;
`;

const Rail = styled.div`
  display: flex;
  flex-direction: column;
  width: 48px;
  flex: none;
  background: #fff;
`;

const RailItem = styled.div<{ $active?: boolean; $line?: boolean; $height?: number }>`
  display: flex;
  align-items: center;
  justify-content: center;
  box-sizing: border-box;
  height: ${({ $height }) => $height ?? 48}px;
  color: ${({ $active }) => ($active ? '#2b2b2b' : '#666')};
  background: ${({ $active }) => ($active ? '#eaeaea' : '#fff')};
  border-bottom: ${({ $line }) => ($line ? '2px solid #e6e6e6' : 'none')};
`;

const RailFoot = styled.div`
  display: flex;
  align-items: center;
  justify-content: center;
  height: 50px;
  margin-top: auto;
  color: #777;
`;

const App = () => (
  <Page>
    <GlobalStyle />
    <TopBar>
      <MenuButton />
      <MapTitle>無題のマップ</MapTitle>
      <ClassicLink>Map Viewer Classic で開く</ClassicLink>
      <BarTools>
        <BarTool $width={57}>
          <Bell size={21} strokeWidth={1} />
        </BarTool>
        <BarTool $width={55}>
          <AppsDots />
        </BarTool>
        <Avatar />
        <BlurName>
          <BlurLine $width={130} $height={9} $tone="#8a8a8a" />
          <BlurLine $width={95} $height={6} $tone="#c4c4c4" />
        </BlurName>
      </BarTools>
    </TopBar>
    <Workspace>
      <SideNav>
        <NavGroup>
          {['add', 'layers', 'table', 'qr', 'chart', 'list', 'bookmark'].map((name) => (
            <NavItem key={name}>
              <NavGlyph name={name} />
            </NavItem>
          ))}
        </NavGroup>
        <NavGroup>
          <NavItem>
            <NavGlyph name="folder" />
            <BlueDot $right={11} $bottom={13} />
          </NavItem>
          <NavItem>
            <Settings size={18} strokeWidth={1} />
          </NavItem>
        </NavGroup>
        <NavGroup>
          <NavItem $dim>
            <NavGlyph name="share" />
          </NavItem>
          <NavItem $dim>
            <NavGlyph name="grid" />
          </NavItem>
          <NavItem>
            <Printer size={18} strokeWidth={1} />
          </NavItem>
        </NavGroup>
        <NavBottom>
          <NavItem>
            <NavGlyph name="info" />
            <BlueDot $right={14} $bottom={11} />
          </NavItem>
          <NavItem>
            <ChevronsRight size={16} strokeWidth={1} />
          </NavItem>
        </NavBottom>
      </SideNav>
      <MapArea>
        <BaseMap />
        <MapControls>
          <ControlGroup>
            <ControlButton>
              <Search size={16} strokeWidth={1} />
            </ControlButton>
          </ControlGroup>
          <ControlGroup>
            <ControlButton>
              <NavGlyph name="basemap" />
            </ControlButton>
          </ControlGroup>
          <ControlGroup>
            <ControlButton>
              <Monitor size={18} strokeWidth={1} />
            </ControlButton>
          </ControlGroup>
          <ControlGroup>
            <ControlButton>
              <NavGlyph name="home" />
            </ControlButton>
          </ControlGroup>
          <ControlGroup>
            <ControlButton>
              <Plus size={16} strokeWidth={1} />
            </ControlButton>
            <ControlButton $divided>
              <Minus size={16} strokeWidth={1} />
            </ControlButton>
          </ControlGroup>
        </MapControls>
        <Attribution>
          <span>Esri, Intermap, NASA, NGA, USGS | GSI, Esri, TomTom, Garmin, Foursquare, GeoTechnologies, Inc, METI/NASA, USGS</span>
          <span>Powered by Esri</span>
        </Attribution>
      </MapArea>
      <Panel>
        <PanelHeader>
          <BackButton>
            <ChevronLeft size={15} strokeWidth={1} />
          </BackButton>
          <PanelTitle>バッファー</PanelTitle>
          <InfoIcon $gap={15}>
            <NavGlyph name="info" size={16} />
          </InfoIcon>
        </PanelHeader>
        <Tabs>
          <Tab>
            <NavGlyph name="home" size={16} />
          </Tab>
          <Tab $active>
            <Hammer />
          </Tab>
          <Tab>
            <History size={16} strokeWidth={1} />
            <BlueDot $right={52} $bottom={9} />
          </Tab>
        </Tabs>
        <Section>
          <FieldRow>
            <FieldLabel>
              入力ポイント
              <Required />
            </FieldLabel>
            <InfoIcon $gap={6}>
              <NavGlyph name="info" size={16} />
            </InfoIcon>
          </FieldRow>
          <LayerChip>
            <div>
              <ChipName>バッファー 入力ポイント スケッチ (ポイント)</ChipName>
              <ChipMeta>フィーチャ数: 1</ChipMeta>
            </div>
            <X size={14} strokeWidth={1} />
          </LayerChip>
          <FieldRow>
            <FieldLabel>
              距離<Unit>(km)</Unit>
              <Required />
            </FieldLabel>
            <InfoIcon $gap={6}>
              <NavGlyph name="info" size={16} />
            </InfoIcon>
          </FieldRow>
          <NumberField>
            <NumberValue>1</NumberValue>
            <Spinner>
              <SpinButton>
                <ChevronUp size={13} strokeWidth={1.2} />
              </SpinButton>
              <SpinButton $divided>
                <ChevronDown size={13} strokeWidth={1.2} />
              </SpinButton>
            </Spinner>
          </NumberField>
        </Section>
        <EnvSection>
          <div>
            <EnvTitle>環境設定</EnvTitle>
            <EnvNote>解析の実行方法に影響する追加の設定を指定します。</EnvNote>
          </div>
          <ChevronDown size={14} strokeWidth={1.2} />
        </EnvSection>
        <Footer>
          <ActionButton $primary>実行</ActionButton>
          <ActionButton>戻る</ActionButton>
        </Footer>
      </Panel>
      <Rail>
        <RailItem>
          <NavGlyph name="sliders" />
        </RailItem>
        <RailItem>
          <NavGlyph name="sparkle" />
        </RailItem>
        <RailItem $active $height={49}>
          <NavGlyph name="analysis" />
        </RailItem>
        <RailItem $line $height={49}>
          <NavGlyph name="edit" />
        </RailItem>
        <RailItem $line $height={49}>
          <Wrench size={17} strokeWidth={1} />
        </RailItem>
        <RailFoot>
          <ChevronsLeft size={16} strokeWidth={1} />
        </RailFoot>
      </Rail>
    </Workspace>
  </Page>
);

export default App;
